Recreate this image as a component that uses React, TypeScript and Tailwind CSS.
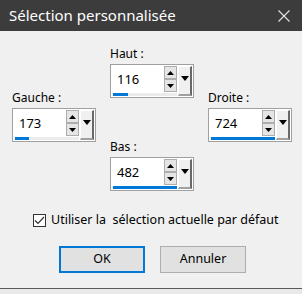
const font = { fontFamily: '"Noto Sans", "Open Sans", sans-serif' }

type SpinProps = { label: string; value: string; bar: string }

function UpTri() {
  return (
    <svg width="7" height="4" viewBox="0 0 7 4">
      <polygon points="3.5,0 7,4 0,4" fill="#000" />
    </svg>
  )
}

function DownTri() {
  return (
    <svg width="7" height="4" viewBox="0 0 7 4">
      <polygon points="0,0 7,0 3.5,4" fill="#000" />
    </svg>
  )
}

function SpinField({ label, value, bar }: SpinProps) {
  return (
    <div className="flex flex-col">
      <div className="h-[16px] text-[12px] leading-[16px] text-black">{label}</div>
      <div className="mt-[2px] flex h-[34px] w-[84px] border border-[#a0a0a0] bg-white p-px">
        <div className="flex flex-1 flex-col">
          <div className="flex flex-1">
            <div className="flex flex-1 items-center pl-[5px] text-[13px] text-black">{value}</div>
            <div className="flex w-[13px] flex-col justify-between pb-px">
              <div className="flex h-[13px] items-center justify-center border border-[#adadad] bg-[#e5e5e5]">
                <UpTri />
              </div>
              <div className="flex h-[13px] items-center justify-center border border-[#adadad] bg-[#e5e5e5]">
                <DownTri />
              </div>
            </div>
          </div>
          <div className="h-[3px] bg-[#ececec] pl-px">
            <div className={`h-full bg-[#0078d7] ${bar}`} />
          </div>
        </div>
        <div className="ml-px flex w-[14px] items-start justify-center border-t border-l border-r-2 border-b-2 border-t-white border-l-white border-r-[#696969] border-b-[#a0a0a0] bg-[#f0f0f0] pt-[9px]">
          <svg width="8" height="5" viewBox="0 0 8 5">
            <polygon points="0,0 8,0 4,5" fill="#000" />
          </svg>
        </div>
      </div>
    </div>
  )
}

export default function App() {
  return (
    <div className="flex h-[294px] w-[302px] flex-col bg-[#e9e9e9]" style={font}>
      <div className="flex h-[31px] items-center justify-between bg-[#3c3c3c] pl-[9px] pr-[12px]">
        <span className="text-[15px] text-white">Sélection personnalisée</span>
        <svg width="12" height="12" viewBox="0 0 12 12">
          <path d="M0.5 0.5 L11.5 11.5 M11.5 0.5 L0.5 11.5" stroke="#e6e6e6" strokeWidth="1.1" />
        </svg>
      </div>

      <div className="flex h-[257px] flex-col bg-[#f0f0f0]">
        <div className="flex gap-[14px] pl-[12px]">
          <div className="pt-[59px]">
            <SpinField label="Gauche :" value="173" bar="w-[14px]" />
          </div>
          <div className="flex flex-col gap-[41px] pt-[15px]">
            <SpinField label="Haut :" value="116" bar="w-[15px]" />
            <SpinField label="Bas :" value="482" bar="w-full" />
          </div>
          <div className="pt-[59px]">
            <SpinField label="Droite :" value="724" bar="w-full" />
          </div>
        </div>

        <label className="mt-[20px] flex items-center pl-[33px]">
          <span className="flex h-[13px] w-[13px] items-center justify-center border border-[#333] bg-white">
            <svg width="11" height="9" viewBox="0 0 11 9">
              <path d="M1 4.5 L4 7.5 L10 1" fill="none" stroke="#333" strokeWidth="1.2" />
            </svg>
          </span>
          <span className="ml-[5px] text-[12.5px] text-black">Utiliser la&nbsp; sélection actuelle par défaut</span>
        </label>

        <div className="mt-[16px] flex gap-[15px] pl-[59px]">
          <button
            type="button"
            className="h-[27px] w-[86px] border-2 border-[#0078d7] bg-[#e1e1e1] text-[12.5px] text-black"
          >
            OK
          </button>
          <button
            type="button"
            className="h-[27px] w-[86px] border border-[#adadad] bg-[#e1e1e1] text-[12.5px] text-black"
          >
            Annuler
          </button>
        </div>
      </div>
      <div className="h-px bg-[#5a5a5a]" />
    </div>
  )
}
